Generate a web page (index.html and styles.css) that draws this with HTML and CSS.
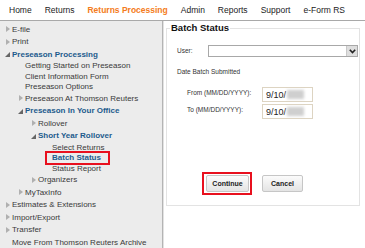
FILE: index.html
```html
<!DOCTYPE html>
<html>
<head>
<meta charset="utf-8">
<link rel="stylesheet" href="styles.css">
</head>
<body>
<nav class="topnav">
  <span class="nav-item">Home</span>
  <span class="nav-item">Returns</span>
  <span class="nav-item nav-active">Returns Processing</span>
  <span class="nav-item">Admin</span>
  <span class="nav-item">Reports</span>
  <span class="nav-item">Support</span>
  <span class="nav-item">e-Form RS</span>
</nav>
<div class="main">
  <aside class="sidebar">
    <ul class="tree">
      <li class="row lvl0"><span class="tri"></span>E-file</li>
      <li class="row lvl0"><span class="tri"></span>Print</li>
      <li class="row lvl0 open"><span class="tri-open"></span>Preseason Processing</li>
      <li class="row leaf lvl1">Getting Started on Preseason</li>
      <li class="row leaf lvl1">Client Information Form</li>
      <li class="row leaf lvl1">Preseason Options</li>
      <li class="row lvl1"><span class="tri"></span>Preseason At Thomson Reuters</li>
      <li class="row lvl1 open"><span class="tri-open"></span>Preseason In Your Office</li>
      <li class="row lvl2"><span class="tri"></span>Rollover</li>
      <li class="row lvl2 open"><span class="tri-open"></span>Short Year Rollover</li>
      <li class="row leaf lvl3">Select Returns</li>
      <li class="row leaf lvl3 current"><span class="hl">Batch Status</span></li>
      <li class="row leaf lvl3">Status Report</li>
      <li class="row lvl2"><span class="tri"></span>Organizers</li>
      <li class="row lvl1"><span class="tri"></span>MyTaxInfo</li>
      <li class="row lvl0"><span class="tri"></span>Estimates &amp; Extensions</li>
      <li class="row lvl0"><span class="tri"></span>Import/Export</li>
      <li class="row lvl0"><span class="tri"></span>Transfer</li>
      <li class="row lvl0">Move From Thomson Reuters Archive</li>
    </ul>
  </aside>
  <section class="content">
    <fieldset class="panel">
      <legend class="panel-title">Batch Status</legend>
      <div class="form">
        <div class="user-row">
          <span class="lbl user-lbl">User:</span>
          <div class="select">
            <span class="select-btn">
              <svg width="7" height="5" viewBox="0 0 7 5"><path d="M0.8 0.8 L3.5 3.6 L6.2 0.8" fill="none" stroke="#222" stroke-width="1.6"/></svg>
            </span>
          </div>
        </div>
        <div class="lbl section-lbl">Date Batch Submitted</div>
        <div class="date-rows">
          <div class="date-row">
            <span class="lbl date-lbl">From (MM/DD/YYYY):</span>
            <span class="input"><span class="val">9/10/</span><span class="blur"></span></span>
          </div>
          <div class="date-row">
            <span class="lbl date-lbl">To (MM/DD/YYYY):</span>
            <span class="input"><span class="val">9/10/</span><span class="blur"></span></span>
          </div>
        </div>
        <div class="buttons">
          <span class="btn-hl"><button class="btn">Continue</button></span>
          <button class="btn">Cancel</button>
        </div>
      </div>
    </fieldset>
  </section>
</div>
</body>
</html>
```
FILE: styles.css
```css
* { box-sizing: border-box; }
html, body { margin: 0; padding: 0; background: #fff; }
body {
  width: 365px;
  height: 248px;
  overflow: hidden;
  font-family: "Liberation Sans", Arial, sans-serif;
  color: #333;
}
.topnav {
  display: flex;
  gap: 13px;
  height: 21px;
  padding-left: 9px;
  border-bottom: 1px solid #a9a9a9;
  font-size: 8.5px;
  line-height: 20px;
  color: #222;
  white-space: nowrap;
}
.nav-active { color: #f47b20; font-weight: bold; }
.main { display: flex; height: 227px; }
.sidebar {
  width: 163px;
  flex: none;
  background: #ececec;
  border-right: 1px solid #b4b4b4;
  padding-top: 2px;
}
.tree { list-style: none; margin: 0; padding: 0; font-size: 8px; color: #3a3a3a; }
.row {
  display: flex;
  align-items: center;
  height: 12.5px;
  white-space: nowrap;
}
.row.leaf { height: 10.5px; }
.lvl0 { padding-left: 12px; }
.lvl1 { padding-left: 25px; }
.lvl2 { padding-left: 38px; }
.lvl3 { padding-left: 52px; }
.open { color: #1d5b8d; font-weight: bold; }
.tri {
  width: 0; height: 0;
  margin-left: -6px;
  margin-right: 2px;
  border-left: 4px solid #b0b0b0;
  border-top: 3px solid transparent;
  border-bottom: 3px solid transparent;
}
.tri-open {
  width: 0; height: 0;
  margin-left: -7px;
  margin-right: 2px;
  margin-top: 1px;
  border-bottom: 5px solid #666;
  border-left: 5px solid transparent;
}
.current { color: #1d5b8d; font-weight: bold; }
.hl {
  display: inline-block;
  border: 2px solid #e8101e;
  margin: -2px 0 -2px -7px;
  padding: 0 7px 0 5px;
  line-height: 10px;
}
.content {
  flex: 1;
  border-left: 1px solid #e2e2e2;
  padding: 0 5px 0 2px;
}
.panel {
  margin: 0;
  border: 1px solid #e3e3e3;
  padding: 0 0 10px 3px;
  min-width: 0;
}
.panel-title {
  padding: 0 1px;
  font-size: 9.5px;
  line-height: 14px;
  font-weight: bold;
  color: #111;
}
.form { padding-left: 7px; }
.lbl { font-size: 6.5px; color: #333; line-height: 10px; white-space: nowrap; }
.user-row {
  display: flex;
  align-items: center;
  margin-top: 10px;
}
.user-lbl { width: 31px; }
.select {
  width: 150px;
  height: 12px;
  border: 1px solid #a8a8a8;
  background: #fff;
  display: flex;
  justify-content: flex-end;
}
.select-btn {
  width: 11px;
  height: 10px;
  background: #dedede;
  border-left: 1px solid #c8c8c8;
  display: flex;
  align-items: center;
  justify-content: center;
}
.section-lbl { margin-top: 10px; }
.date-rows {
  margin-top: 10px;
  padding-left: 10px;
  display: flex;
  flex-direction: column;
  gap: 2px;
}
.date-row { display: flex; align-items: center; }
.date-lbl { width: 75px; margin-top: -3px; }
.input {
  width: 51px;
  height: 15px;
  border: 1px solid #ddd4c2;
  background: #fff;
  display: flex;
  align-items: center;
  padding-left: 3px;
}
.val { font-size: 9px; color: #222; }
.blur {
  width: 17px;
  height: 9px;
  background: #cfcfcf;
  filter: blur(1.5px);
  margin-left: 1px;
}
.buttons {
  margin-top: 53px;
  padding-left: 25px;
  display: flex;
  align-items: center;
  gap: 10px;
}
.btn-hl {
  display: inline-flex;
  border: 2px solid #e8101e;
  padding: 1px 1px 1px 2px;
}
.btn {
  height: 17px;
  padding: 0 4px;
  margin: 0;
  border: 1px solid #c6c6c6;
  border-radius: 2px;
  background: linear-gradient(#fbfbfb, #e4e4e4);
  font-family: inherit;
  font-size: 7px;
  font-weight: bold;
  color: #222;
}
.btn-hl .btn { width: 43px; }
.buttons > .btn { width: 41px; }
```
